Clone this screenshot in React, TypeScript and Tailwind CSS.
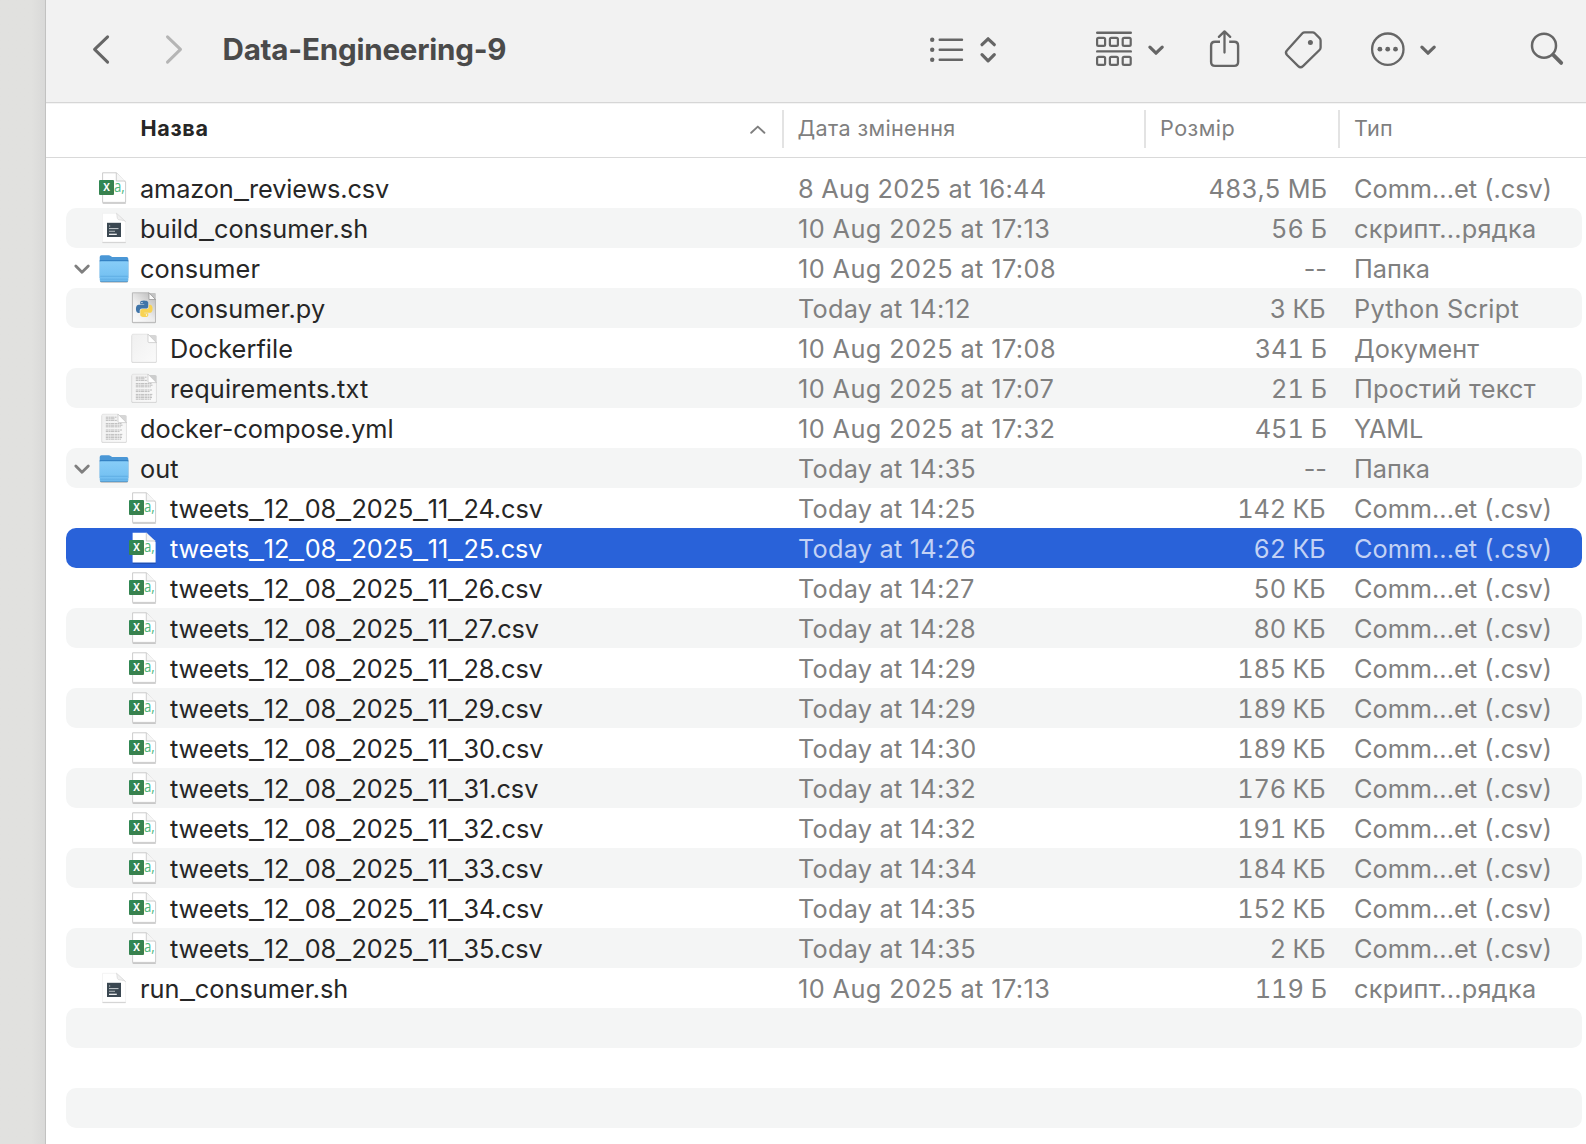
import type { ReactNode } from "react";

type IconKind = "csv" | "sh" | "folder" | "py" | "blank" | "text";

interface Entry {
  name: string;
  icon: IconKind;
  depth?: number;
  open?: boolean;
  selected?: boolean;
  date: string;
  size: string;
  type: string;
}

const CSV = "Comm...et (.csv)";

const tweet = (n: number, time: string, size: string, selected = false): Entry => ({
  name: `tweets_12_08_2025_11_${n}.csv`,
  icon: "csv",
  depth: 1,
  date: `Today at ${time}`,
  size,
  type: CSV,
  selected,
});

const entries: Entry[] = [
  { name: "amazon_reviews.csv", icon: "csv", date: "8 Aug 2025 at 16:44", size: "483,5 МБ", type: CSV },
  { name: "build_consumer.sh", icon: "sh", date: "10 Aug 2025 at 17:13", size: "56 Б", type: "скрипт...рядка" },
  { name: "consumer", icon: "folder", open: true, date: "10 Aug 2025 at 17:08", size: "--", type: "Папка" },
  { name: "consumer.py", icon: "py", depth: 1, date: "Today at 14:12", size: "3 КБ", type: "Python Script" },
  { name: "Dockerfile", icon: "blank", depth: 1, date: "10 Aug 2025 at 17:08", size: "341 Б", type: "Документ" },
  { name: "requirements.txt", icon: "text", depth: 1, date: "10 Aug 2025 at 17:07", size: "21 Б", type: "Простий текст" },
  { name: "docker-compose.yml", icon: "text", date: "10 Aug 2025 at 17:32", size: "451 Б", type: "YAML" },
  { name: "out", icon: "folder", open: true, date: "Today at 14:35", size: "--", type: "Папка" },
  tweet(24, "14:25", "142 КБ"),
  tweet(25, "14:26", "62 КБ", true),
  tweet(26, "14:27", "50 КБ"),
  tweet(27, "14:28", "80 КБ"),
  tweet(28, "14:29", "185 КБ"),
  tweet(29, "14:29", "189 КБ"),
  tweet(30, "14:30", "189 КБ"),
  tweet(31, "14:32", "176 КБ"),
  tweet(32, "14:32", "191 КБ"),
  tweet(33, "14:34", "184 КБ"),
  tweet(34, "14:35", "152 КБ"),
  tweet(35, "14:35", "2 КБ"),
  { name: "run_consumer.sh", icon: "sh", date: "10 Aug 2025 at 17:13", size: "119 Б", type: "скрипт...рядка" },
];

const PY_BLUE =
  "M14.25.18l.9.2.73.26.59.3.45.32.34.34.25.34.16.33.1.3.04.26.02.2-.01.13V8.5l-.05.63-.13.55-.21.46-.26.38-.3.31-.33.25-.35.19-.35.14-.33.1-.3.07-.26.04-.21.02H8.77l-.69.05-.59.14-.5.22-.41.27-.33.32-.27.35-.2.36-.15.37-.1.35-.07.32-.04.27-.02.21v3.06H3.17l-.21-.03-.28-.07-.32-.12-.35-.18-.36-.26-.36-.36-.35-.46-.32-.59-.28-.73-.21-.88-.14-1.05-.05-1.23.06-1.22.16-1.04.24-.87.32-.71.36-.57.4-.44.42-.33.42-.24.4-.16.36-.1.32-.05.24-.01h.16l.06.01h8.16v-.83H6.18l-.01-2.75-.02-.37.05-.34.11-.31.17-.28.25-.26.31-.23.38-.2.44-.18.51-.15.58-.12.64-.1.71-.06.77-.04.84-.02 1.27.05z";
const PY_YELLOW =
  "M21.1 6.11l.28.06.32.12.35.18.36.27.36.35.35.47.32.59.28.73.21.88.14 1.04.05 1.23-.06 1.23-.16 1.04-.24.86-.32.71-.36.57-.4.45-.42.33-.42.24-.4.16-.36.09-.32.05-.24.02-.16-.01h-8.22v.82h5.84l.01 2.76.02.36-.05.34-.11.31-.17.29-.25.25-.31.24-.38.2-.44.17-.51.15-.58.13-.64.09-.71.07-.77.04-.84.01-1.27-.04-1.07-.14-.9-.2-.73-.25-.59-.3-.45-.33-.34-.34-.25-.34-.16-.33-.1-.3-.04-.25-.02-.2.01-.13v-5.34l.05-.64.13-.54.21-.46.26-.38.3-.32.33-.24.35-.2.35-.14.33-.1.3-.06.26-.04.21-.02.13-.01h5.84l.69-.05.59-.14.5-.21.41-.28.33-.32.27-.35.2-.36.15-.36.1-.35.07-.32.04-.28.02-.21V6.07h2.09l.14.01z";

function SharedGradients() {
  return (
    <svg width="0" height="0" className="absolute">
      <defs>
        <linearGradient id="excel" x1="0" y1="0" x2="1" y2="1">
          <stop offset="0" stopColor="#2f8a55" />
          <stop offset="1" stopColor="#3c7c4a" />
        </linearGradient>
        <linearGradient id="folder" x1="0" y1="0" x2="0" y2="1">
          <stop offset="0" stopColor="#87cdf8" />
          <stop offset="1" stopColor="#6fbdf0" />
        </linearGradient>
        <linearGradient id="pyPage" x1="0" y1="1" x2="0.8" y2="0">
          <stop offset="0" stopColor="#fdfdfd" />
          <stop offset="0.5" stopColor="#ececec" />
          <stop offset="1" stopColor="#bdbdbd" />
        </linearGradient>
        <linearGradient id="page" x1="0" y1="0" x2="1" y2="1">
          <stop offset="0" stopColor="#f0f0f0" />
          <stop offset="1" stopColor="#fafafa" />
        </linearGradient>
      </defs>
    </svg>
  );
}

function CsvIcon({ selected }: { selected?: boolean }) {
  return (
    <>
      <path d="M4.7 35.1H27.8" stroke="#000" strokeOpacity="0.3" strokeWidth="1" />
      <path d="M4.6 4.8H18.5L27.6 14V34.4H4.6Z" fill="#fff" stroke={selected ? "none" : "#c6c6c6"} strokeWidth="0.9" strokeLinejoin="round" />
      <path d="M18.3 4.8V13H27.4" fill="#f6f6f6" stroke="#c8c8c8" strokeWidth="0.9" />
      <rect x="1" y="12" width="15" height="15" rx="1" fill="url(#excel)" />
      <text transform="translate(8.5 23.4) scale(0.88 1)" textAnchor="middle" fontSize="11.3" fontWeight="700" fill="#fff" fontFamily="Open Sans, sans-serif">X</text>
      <text transform="translate(16 24.3) scale(0.8 1)" fontSize="16.5" fill="#4cb87c" fontFamily="Open Sans, sans-serif">a,</text>
    </>
  );
}

function ShIcon() {
  return (
    <>
      <path d="M4.5 34.6H27.7" stroke="#c6c6c6" strokeWidth="1" />
      <path d="M4.5 5.3H18.5L27.6 13.5V34H4.5Z" fill="#fff" stroke="#ededed" strokeWidth="0.6" />
      <path d="M18.5 5.3C19.4 8 18.6 10.4 20.2 11.5C22 12.4 25.4 11.8 27.6 13.5Z" fill="#f0f0f0" stroke="#d2d2d2" strokeWidth="0.6" />
      <rect x="9" y="14.8" width="14" height="14.2" fill="#3b4852" />
      <path d="M11 18H12.2M11 20.6H20.5" stroke="#c9ced2" strokeWidth="1" />
      <path d="M11 23.3H17" stroke="#aab1b6" strokeWidth="1.1" />
      <path d="M11 26.3H18.8" stroke="#fff" strokeWidth="1.2" />
    </>
  );
}

function FolderIcon() {
  return (
    <>
      <rect x="2" y="10.5" width="28.2" height="24.2" rx="1.6" fill="#000" fillOpacity="0.25" />
      <path d="M1.7 9Q1.7 7.2 3.5 7.2H10.8Q11.8 7.2 12.6 8L13.4 8.6Q14 9.1 15 9.1H28.6Q30.3 9.1 30.3 10.8V30H1.7Z" fill="#4a97d6" />
      <path d="M1.7 12.2H30.3V13.6H1.7Z" fill="#2f7ec0" />
      <path d="M1.7 14.4Q1.7 13.2 3 13.2H29Q30.3 13.2 30.3 14.4V32Q30.3 33.7 28.6 33.7H3.4Q1.7 33.7 1.7 32Z" fill="url(#folder)" />
      <path d="M2.2 28.3H29.8M2.2 31.2H29.8" stroke="#58a8e0" strokeWidth="0.7" />
      <path d="M2.2 33.4H29.8" stroke="#4b93c8" strokeWidth="0.8" />
    </>
  );
}

function PyIcon() {
  return (
    <>
      <rect x="4.2" y="5" width="23.6" height="30.2" rx="1" fill="#000" fillOpacity="0.2" />
      <path d="M4.4 4.8H21L27.5 11.5V34.4H4.4Z" fill="url(#pyPage)" stroke="#b5b5b5" strokeWidth="0.9" strokeLinejoin="round" />
      <path d="M21 4.8V11.5H27.5Z" fill="#fafafa" stroke="#8e8e8e" strokeWidth="0.7" />
      <g transform="translate(8 12.6) scale(0.685)">
        <path d={PY_BLUE} fill="#3f74a8" />
        <path d={PY_YELLOW} fill="#f8d353" />
        <circle cx="8.7" cy="2.9" r="1" fill="#fff" />
        <circle cx="15.3" cy="21" r="1" fill="#fff" />
      </g>
    </>
  );
}

function PageIcon({ lines }: { lines?: boolean }) {
  return (
    <>
      <rect x="3.5" y="7" width="25.2" height="28" rx="1.6" fill="#000" fillOpacity="0.16" />
      <path d="M3.8 7.4Q3.8 6.2 5 6.2H20L28.4 14.6V33Q28.4 34.3 27.2 34.3H5Q3.8 34.3 3.8 33Z" fill="url(#page)" stroke="#dadada" strokeWidth="0.6" />
      {lines && (
        <path
          d="M7.8 9.2H18.5M7.8 10.8H17M7.8 12.4H18.8M7.8 15.6H23.5M7.8 17.2H24.5M7.8 18.8H22.8M7.8 22H24M7.8 23.6H22M7.8 26.4H24.3M7.8 28H23.6M7.8 29.6H24M7.8 31.2H23"
          stroke="#aeaeae"
          strokeWidth="0.8"
          strokeDasharray="2.6 0.4 1.7 0.4 3.3 0.5"
        />
      )}
      <path d="M20 6.2L28.4 14.6H21.2Q20 14.6 20 13.4Z" fill="#fff" stroke="#b9b9b9" strokeWidth="0.6" />
    </>
  );
}

function FileIcon({ kind, selected }: { kind: IconKind; selected?: boolean }) {
  return (
    <svg width="32" height="40" viewBox="0 0 32 40" className="shrink-0">
      {kind === "csv" && <CsvIcon selected={selected} />}
      {kind === "sh" && <ShIcon />}
      {kind === "folder" && <FolderIcon />}
      {kind === "py" && <PyIcon />}
      {kind === "blank" && <PageIcon />}
      {kind === "text" && <PageIcon lines />}
    </svg>
  );
}

/* Underscores are drawn wide enough to touch their neighbours; a following "1" tucks in closer. */
function FileName({ name }: { name: string }) {
  const parts = name.split(/(_)/);
  return parts.map((part, i) =>
    part === "_" ? (
      <span
        key={i}
        className={`inline-block w-[15.3px] origin-left translate-y-px scale-x-[1.3] tracking-normal ${parts[i + 1].startsWith("1") ? "-mr-px" : ""}`}
      >
        _
      </span>
    ) : (
      part
    ),
  );
}

function nameTracking(name: string) {
  if (name.startsWith("tweets")) return "tracking-[-0.06px]";
  if (name.startsWith("amazon")) return "tracking-[-0.1px]";
  if (name.startsWith("run")) return "tracking-[0.02px]";
  if (name.startsWith("req")) return "tracking-[0.17px]";
  if (name.startsWith("docker-")) return "tracking-[0px]";
  return "tracking-[0.09px]";
}

function dateTracking(date: string) {
  if (date.startsWith("10")) return "tracking-[0.4px]";
  return date.startsWith("8") ? "tracking-[0.3px]" : "tracking-[0.23px]";
}

function typeTracking(type: string) {
  if (/^(скрипт|Python|Простий)/.test(type)) return "tracking-[0.25px]";
  return type === "YAML" ? "tracking-[-0.2px]" : "tracking-[0.02px]";
}

function sizeStyle(size: string) {
  if (size === "--") return "pr-0";
  return size.endsWith("КБ") ? "pr-[1.5px] tabular-nums tracking-[-0.2px]" : "pr-0 tabular-nums";
}

function Row({ entry, striped }: { entry?: Entry; striped: boolean }) {
  const selected = entry?.selected;
  const bg = selected ? "bg-[#2962d9]" : striped ? "bg-[#f4f5f5]" : "";
  const nameColor = selected ? "text-white" : "text-[#262626]";
  const metaColor = selected ? "text-[#c3d2f5]" : "text-[#808080]";
  return (
    <div className={`flex h-10 shrink-0 items-center rounded-[10px] text-[25.3px] leading-10 font-[430] whitespace-pre ${bg}`}>
      {entry && (
        <>
          <div className={`flex w-[732px] items-center ${nameColor}`}>
            <div className="h-10 w-8 shrink-0">
              {entry.open && (
                <svg width="32" height="40" fill="none" stroke="#7f7f7f" strokeWidth="2.8" strokeLinecap="round" strokeLinejoin="round">
                  <path d="M9.8 17.9L16 24.2L22.3 17.9" />
                </svg>
              )}
            </div>
            {entry.depth === 1 && <div className="w-[30px] shrink-0" />}
            <FileIcon kind={entry.icon} selected={selected} />
            <span className={`ml-[10px] pt-[2px] leading-[40px] ${nameTracking(entry.name)}`}>
              <FileName name={entry.name} />
            </span>
          </div>
          <div className={`w-[361.5px] pt-[2px] ${dateTracking(entry.date)} ${metaColor}`}>{entry.date}</div>
          <div className={`w-[167.5px] pt-[2px] text-right ${sizeStyle(entry.size)} ${metaColor}`}>{entry.size}</div>
          <div className={`ml-[27px] pt-[2px] ${typeTracking(entry.type)} ${metaColor}`}>{entry.type}</div>
        </>
      )}
    </div>
  );
}

/* Toolbar glyph: left edge and width in toolbar space, full toolbar height. */
function Glyph({ x, w, className, children }: { x: number; w: number; className?: string; children: ReactNode }) {
  return (
    <svg
      width={w}
      height="102"
      viewBox={`${x} 0 ${w} 102`}
      fill="none"
      stroke="#666"
      strokeWidth="2.4"
      strokeLinecap="round"
      strokeLinejoin="round"
      className={`shrink-0 ${className ?? ""}`}
    >
      {children}
    </svg>
  );
}

function Toolbar() {
  return (
    <div className="flex h-[102px] shrink-0 bg-[#f2f2f2]">
      <Glyph x={90} w={22} className="ml-[44px]">
        <path d="M107.6 36.8L94.6 49.4L107.6 62.1" strokeWidth="3" />
      </Glyph>
      <Glyph x={164} w={22} className="ml-[52px]">
        <path d="M167.5 36.8L180.5 49.4L167.5 62.1" stroke="#b5b5b5" strokeWidth="3" />
      </Glyph>
      <div className="ml-[36.5px] w-[703.5px] text-[29.6px] leading-[98px] font-bold tracking-[-0.22px] whitespace-pre text-[#4a4a4a]">Data-Engineering-9</div>
      <Glyph x={926} w={74}>
        <path d="M939.7 39.8H962M939.7 49.8H962M939.7 59.8H962" />
        <g fill="#666" stroke="none">
          <circle cx="932.2" cy="39.8" r="2.2" />
          <circle cx="932.2" cy="49.8" r="2.2" />
          <circle cx="932.2" cy="59.8" r="2.2" />
        </g>
        <path d="M982 44.7L988.1 38.8L994.3 44.7M982 54.7L988.1 60.8L994.3 54.7" strokeWidth="3.2" />
      </Glyph>
      <Glyph x={1090} w={80} className="ml-[90px]">
        <path d="M1097.2 32.7H1130.8M1097.2 51.4H1130.8" />
        {[37.9, 56.9].map((y) =>
          [1097.1, 1109.9, 1122.7].map((x) => <rect key={`${x}-${y}`} x={x} y={y} width="8" height="8" rx="1.4" strokeWidth="2.2" />),
        )}
        <path d="M1149.9 47.2L1156 53.2L1162.2 47.2" strokeWidth="3.2" />
      </Glyph>
      <Glyph x={1204} w={40} className="ml-[34px]">
        <path d="M1220 41.8H1215Q1211.1 41.8 1211.1 45.7V62Q1211.1 65.9 1215 65.9H1234.2Q1238.1 65.9 1238.1 62V45.7Q1238.1 41.8 1234.2 41.8H1229.2" strokeLinecap="butt" />
        <path d="M1224.5 31.6V52.6M1218.9 36.9L1224.5 31.4L1230.2 36.9" strokeWidth="2.3" />
      </Glyph>
      <Glyph x={1280} w={46} className="ml-[36px]">
        <path d="M1304.6 32.4H1312.6Q1313.9 32.4 1314.8 33.3L1319.6 38.1Q1320.6 39.1 1320.6 40.4V47.4Q1320.6 48.9 1319.5 50L1303 66.1Q1300.6 68.4 1298.2 66.1L1287 55Q1284.8 52.6 1287.1 50.3L1302.4 33.3Q1303.3 32.4 1304.6 32.4Z" strokeWidth="2.3" />
        <circle cx="1310.4" cy="42.6" r="2.5" fill="#666" stroke="none" />
      </Glyph>
      <Glyph x={1366} w={76} className="ml-[40px]">
        <circle cx="1387.8" cy="49.2" r="15.7" strokeWidth="2.3" />
        <g fill="#666" stroke="none">
          <circle cx="1379.9" cy="49.2" r="2.4" />
          <circle cx="1387.7" cy="49.2" r="2.4" />
          <circle cx="1395.5" cy="49.2" r="2.4" />
        </g>
        <path d="M1421.9 47.2L1428 53.2L1434.2 47.2" strokeWidth="3.2" />
      </Glyph>
      <Glyph x={1526} w={40} className="ml-[84px]">
        <circle cx="1544" cy="45.7" r="12" strokeWidth="2.5" />
        <path d="M1553.5 55.2L1561.2 62.9" strokeWidth="3.8" />
      </Glyph>
    </div>
  );
}

function ColumnHeader() {
  return (
    <div className="flex h-[53px] shrink-0 items-start pt-[6px] text-[21.6px] leading-[36px] text-[#7f7f7f]">
      <div className="flex h-[38px] w-[738px] shrink-0 justify-between border-r-2 border-[#e3e3e3] pl-[94.5px]">
        <span className="font-bold tracking-[0.65px] text-[#262626]">Назва</span>
        <svg width="20" height="38" className="mr-[14px]" fill="none" stroke="#7f7f7f" strokeWidth="1.9" strokeLinecap="round" strokeLinejoin="round">
          <path d="M3.2 22.8L9.8 16.6L16.4 22.8" />
        </svg>
      </div>
      <div className="h-[38px] w-[362px] shrink-0 border-r-2 border-[#e3e3e3] pl-[13.5px] font-[430] tracking-[0.36px]">Дата змінення</div>
      <div className="h-[38px] w-[194px] shrink-0 border-r-2 border-[#e3e3e3] pl-[14px] font-[430] tracking-[0.45px]">Розмір</div>
      <div className="pl-[14px] font-[430] tracking-[0.2px]">Тип</div>
    </div>
  );
}

export default function App() {
  return (
    <div className="flex h-[1144px] w-[1586px] overflow-hidden bg-[#dfdfde] font-['Inter',sans-serif] antialiased">
      <SharedGradients />
      <div className="w-[46px] shrink-0 border-r border-[#c2c2c1] bg-linear-to-r from-[#e1e1df] from-70% to-[#d9d9d8]" />
      <div className="flex w-[1540px] shrink-0 flex-col bg-white">
        <Toolbar />
        <div className="h-px shrink-0 bg-[#d6d6d6]" />
        <div className="h-px shrink-0 bg-[#f4f4f4]" />
        <ColumnHeader />
        <div className="h-px shrink-0 bg-[#d9d9d9]" />
        <div className="mt-[10px] ml-5 flex w-[1516px] flex-col">
          {entries.map((entry, i) => (
            <Row key={entry.name} entry={entry} striped={i % 2 === 1} />
          ))}
          <Row striped />
          <Row striped={false} />
          <Row striped />
        </div>
      </div>
    </div>
  );
}
